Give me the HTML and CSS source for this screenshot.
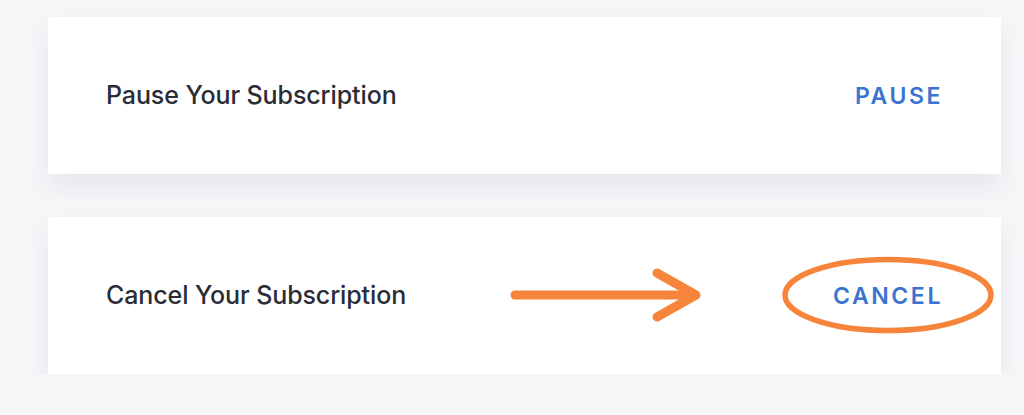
FILE: index.html
```html
<!DOCTYPE html>
<html lang="en">
<head>
<meta charset="utf-8">
<title>Subscription</title>
<link rel="stylesheet" href="styles.css">
</head>
<body>
<main class="page">
  <section class="card">
    <span class="label">Pause Your Subscription</span>
    <a class="action" href="#">PAUSE</a>
  </section>
  <section class="card">
    <span class="label">Cancel Your Subscription</span>
    <a class="action" href="#">CANCEL</a>
    <svg class="annotation" width="953" height="157" viewBox="0 0 953 157" aria-hidden="true">
      <g fill="none" stroke="#f7843b" stroke-linecap="round" stroke-linejoin="round">
        <path d="M467 78 H647" stroke-width="9"/>
        <path d="M609 56 L648 78 L609 100" stroke-width="9"/>
        <ellipse cx="840" cy="78" rx="103" ry="35.5" stroke-width="5.5"/>
      </g>
    </svg>
  </section>
</main>
</body>
</html>
```
FILE: styles.css
```css
html, body {
  margin: 0;
  padding: 0;
  background: #f5f6f8;
}
.page {
  display: flex;
  flex-direction: column;
  gap: 43px;
  padding: 17px 23px 0 48px;
  font-family: "Inter", "Liberation Sans", sans-serif;
}
.card {
  position: relative;
  height: 157px;
  background: #ffffff;
  display: flex;
  align-items: center;
  justify-content: space-between;
  padding: 0 58px;
  box-shadow: 0 12px 22px rgba(30, 40, 70, 0.07);
}
.label {
  font-size: 25px;
  font-weight: 500;
  color: #2a2d36;
  letter-spacing: -0.1px;
  margin-top: -2px;
}
.action {
  font-size: 23px;
  font-weight: 600;
  color: #3b73d1;
  letter-spacing: 2.6px;
  text-decoration: none;
  margin-top: 0;
}
.annotation {
  position: absolute;
  left: 0;
  top: 0;
  pointer-events: none;
}
```
